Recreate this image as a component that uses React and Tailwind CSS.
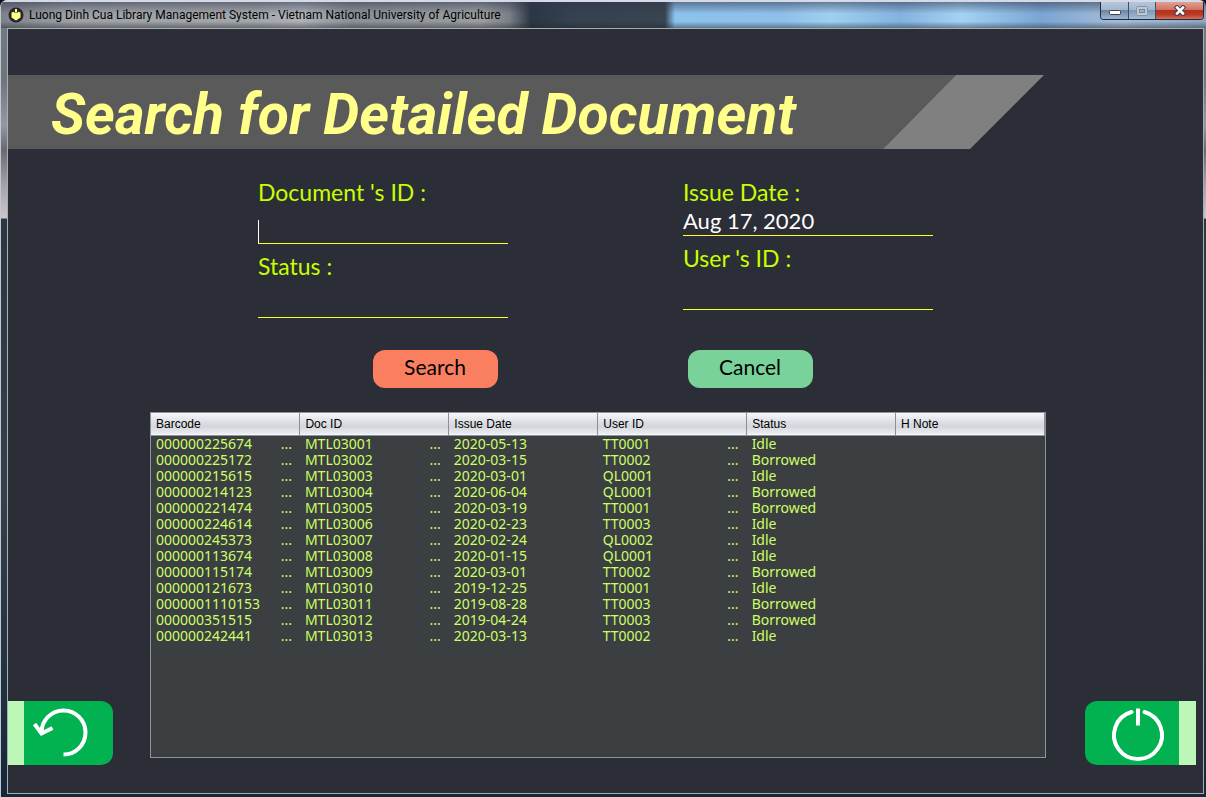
import React from "react";

const columns = ["Barcode", "Doc ID", "Issue Date", "User ID", "Status", "H Note"];

const rows = [
  ["000000225674", "MTL03001", "2020-05-13", "TT0001", "Idle", ""],
  ["000000225172", "MTL03002", "2020-03-15", "TT0002", "Borrowed", ""],
  ["000000215615", "MTL03003", "2020-03-01", "QL0001", "Idle", ""],
  ["000000214123", "MTL03004", "2020-06-04", "QL0001", "Borrowed", ""],
  ["000000221474", "MTL03005", "2020-03-19", "TT0001", "Borrowed", ""],
  ["000000224614", "MTL03006", "2020-02-23", "TT0003", "Idle", ""],
  ["000000245373", "MTL03007", "2020-02-24", "QL0002", "Idle", ""],
  ["000000113674", "MTL03008", "2020-01-15", "QL0001", "Idle", ""],
  ["000000115174", "MTL03009", "2020-03-01", "TT0002", "Borrowed", ""],
  ["000000121673", "MTL03010", "2019-12-25", "TT0001", "Idle", ""],
  ["0000001110153", "MTL03011", "2019-08-28", "TT0003", "Borrowed", ""],
  ["000000351515", "MTL03012", "2019-04-24", "TT0003", "Borrowed", ""],
  ["000000242441", "MTL03013", "2020-03-13", "TT0002", "Idle", ""],
];

const truncated = [0, 1, 3];

function AppIcon() {
  return (
    <svg width="16" height="16" viewBox="0 0 16 16" aria-hidden="true">
      <circle cx="8" cy="8" r="7.5" fill="#23262d" />
      <path d="M3.5 5.5 6 4.8 6.8 6h2.4L10 4.8l2.5.7v5L8 13.5l-4.500-3z" fill="#ffff86" />
      <rect x="7" y="2" width="2" height="3.500" fill="#ffff86" />
    </svg>
  );
}

function TitleBar() {
  return (
    <header className="flex h-7 items-start justify-between border-t-2 border-t-[#d5dae6] bg-[linear-gradient(to_bottom,#31364d88,transparent_45%,transparent_75%,#20283077),linear-gradient(to_right,#7d8188_0,#9da0a5_70px,#a3a6aa_260px,#aeb2b8_300px,#8b8f96_350px,#9a9da0_480px,#7b8088_508px,#2b3643_530px,#35414f_570px,#384450_664px,#8cc2ec_674px,#8fbfe8_780px,#9fd0f2_830px,#83b2dd_900px,#a4d2f5_960px,#7aa5d2_1040px,#a6bdd8_1120px,#8fa6c0_100%)]">
      <div className="flex h-[26px] items-center gap-[5px] pl-[7px]">
        <AppIcon />
        <h1 className="font-['Roboto','Noto_Sans',sans-serif] text-[12px] font-normal leading-4 text-black">
          Luong Dinh Cua Library Management System - Vietnam National University of Agriculture
        </h1>
      </div>
      <div className="mr-[2px] flex h-[18px] overflow-hidden rounded-b-[4px] border border-t-0 border-[#1f2c40]">
        <button aria-label="Minimize" className="flex w-7 items-center justify-center border-r border-[#3d4f66] bg-[linear-gradient(#b9c9dc_0,#a3b6cc_45%,#6c86a3_50%,#9db5cf_100%)]">
          <svg width="12" height="6" viewBox="0 0 12 6" className="mt-1" aria-hidden="true">
            <rect x=".5" y=".5" width="11" height="4" rx="1" fill="#fff" stroke="#3c3f4e" />
          </svg>
        </button>
        <button aria-label="Maximize" className="flex w-[27px] items-center justify-center border-r border-[#3d4f66] bg-[linear-gradient(#b3c6db_0,#a3b8ce_45%,#7e99b6_50%,#a5bcd5_100%)]">
          <svg width="12" height="10" viewBox="0 0 12 10" aria-hidden="true">
            <rect x=".5" y=".5" width="11" height="9" rx="1" fill="#bcc8d5" stroke="#8794a5" />
            <rect x="3.500" y="3.500" width="5" height="3" fill="#9fb2c8" stroke="#748397" />
          </svg>
        </button>
        <button aria-label="Close" className="flex w-[47px] items-center justify-center bg-[linear-gradient(#dfa093_0,#cf7464_45%,#b5311d_50%,#b93c24_75%,#d9705c_100%)]">
          <svg width="12" height="11" viewBox="0 0 12 11" aria-hidden="true">
            <path d="M3 2.500 9 8.500M9 2.500 3 8.500" stroke="#41404d" strokeWidth="4.500" strokeLinecap="square" />
            <path d="M3 2.500 9 8.500M9 2.500 3 8.500" stroke="#fff" strokeWidth="2.500" strokeLinecap="square" />
          </svg>
        </button>
      </div>
    </header>
  );
}

function Banner() {
  return (
    <div className="relative mt-[46px] h-[74px] w-[1036px] max-w-full">
      <svg className="absolute inset-0 size-full" viewBox="0 0 1036 74" preserveAspectRatio="none" aria-hidden="true">
        <path d="M0 0H948L875 74H0z" fill="#5a5a5a" />
        <path d="M948 0H1036L962 74H875z" fill="#808080" />
      </svg>
      <h2 className="relative flex h-full items-center pl-[43px] pt-1 font-['Roboto',sans-serif] text-[57px] font-bold italic leading-none whitespace-nowrap text-[#ffff8a]">
        Search for Detailed Document
      </h2>
    </div>
  );
}

function Field({ id, label, value = "", compact = false, caret = false }) {
  return (
    <div className="relative flex flex-col">
      <label htmlFor={id} className="h-[30px] text-[23px] leading-7 text-[#c8ff00]">
        {label}
      </label>
      <input
        id={id}
        type="text"
        defaultValue={value}
        className={
          (compact ? "h-7" : "h-9") +
          " w-full border-b border-[#ffff22] bg-transparent pb-[2px] text-[22px] leading-[25px] text-white outline-none"
        }
      />
      {caret && <span className="absolute bottom-px left-0 h-[23px] w-px bg-white" />}
    </div>
  );
}

function DocumentTable() {
  return (
    <div className="mb-[7px] min-h-[346px] flex-1 self-stretch border border-[#8e939d] bg-[#3c3f41]">
      <table className="w-full table-fixed border-collapse">
        <thead>
          <tr className="h-[22px] border-b border-[#8e939d] bg-[linear-gradient(#f7f8fa,#dcdee3_45%,#d3d6dc_65%,#eceef3)]">
            {columns.map((name) => (
              <th
                key={name}
                scope="col"
                className="border-r border-[#8b8f98] p-0 pt-px pl-[5px] text-left font-['Liberation_Sans',sans-serif] text-[12px] font-normal leading-5 text-black"
              >
                {name}
              </th>
            ))}
          </tr>
        </thead>
        <tbody className="font-['Noto_Sans',sans-serif] text-[14px] leading-4 text-[#ccff66]">
          {rows.map((row) => (
            <tr key={row[1]} className="h-4">
              {row.map((cell, i) => (
                <td key={i} className="p-0 pl-[5px]">
                  <div className="flex justify-between pr-2">
                    <span>{cell}</span>
                    {truncated.includes(i) && <span>...</span>}
                  </div>
                </td>
              ))}
            </tr>
          ))}
        </tbody>
      </table>
    </div>
  );
}

export default function App() {
  return (
    <div className="flex min-h-screen flex-col bg-[#0c1119]">
      <div className="flex flex-1 flex-col overflow-hidden rounded-t-[7px] border-l border-l-[#c3c8d0] bg-[linear-gradient(to_bottom,#747a83_0,#6f757d_80px,#9299a3_125px,#666b72_150px,#a5a3aa_185px,#c9c6cc_218px,#2a3742_219px,#34404b_500px,#14283a_100%)]">
        <TitleBar />
        <main className="mr-[2px] mb-[3px] ml-[6px] flex flex-1 flex-col border border-[#a9adb2] bg-[#2b2e37] font-['Lato',sans-serif]">
          <Banner />

          <form onSubmit={(e) => e.preventDefault()} className="mt-[29px] flex flex-col">
            <div className="flex justify-center gap-[175px] pr-5">
              <div className="flex w-[250px] flex-col gap-2">
                <Field id="document-id" label="Document 's ID :" caret />
                <Field id="status" label="Status :" />
              </div>
              <div className="flex w-[250px] flex-col gap-2">
                <Field id="issue-date" label="Issue Date :" value="Aug 17, 2020" compact />
                <Field id="user-id" label="User 's ID :" />
              </div>
            </div>
            <div className="mt-8 flex justify-center gap-[190px] pr-[26px]">
              <button type="submit" className="h-[38px] w-[125px] rounded-xl bg-[#fa7f60] pb-1 text-[21px] leading-7 text-black">
                Search
              </button>
              <button type="reset" className="h-[38px] w-[125px] rounded-xl bg-[#78d29a] pb-1 text-[21px] leading-7 text-black">
                Cancel
              </button>
            </div>
          </form>

          <div className="mt-6 flex flex-1 items-end pr-[7px] pb-7">
            <button aria-label="Back" className="mr-[37px] flex h-16 w-[105px] rounded-r-xl border-l-[16px] border-[#bdf7b7] bg-[#02b150]">
              <svg width="89" height="64" viewBox="0 0 89 64" aria-hidden="true" fill="none" stroke="#fff" strokeWidth="4">
                <path d="M39.500 53.500A22 22 0 1 0 17.500 31.500" />
                <path d="M10.500 23 17.500 32.500 28.500 27" strokeWidth="4" />
              </svg>
            </button>
            <DocumentTable />
            <button aria-label="Exit" className="ml-[39px] flex h-16 w-[111px] justify-end rounded-l-xl border-r-[17px] border-[#bdf7b7] bg-[#02b150]">
              <svg width="94" height="64" viewBox="0 0 94 64" aria-hidden="true" fill="none" stroke="#fff" strokeWidth="4" strokeLinecap="round">
                <path d="M46.500 11A24 24 0 1 0 59.500 11" />
                <path d="M53 7.500V24.500" strokeLinecap="butt" />
              </svg>
            </button>
          </div>
        </main>
      </div>
    </div>
  );
}
